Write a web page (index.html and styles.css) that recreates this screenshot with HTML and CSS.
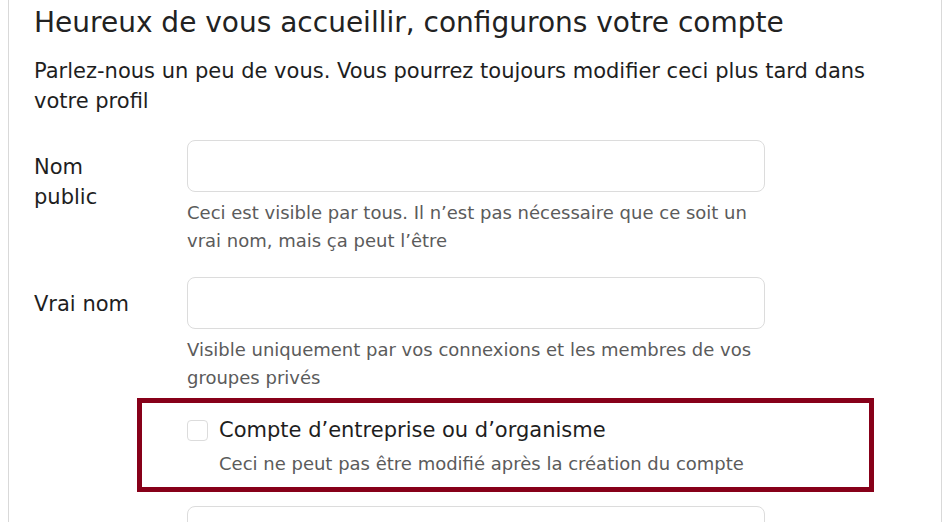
FILE: index.html
```html
<!DOCTYPE html>
<html lang="fr">
<head>
    <meta charset="UTF-8">
    <meta name="viewport" content="width=device-width, initial-scale=1.0">
    <title>Configurer votre compte</title>
    <link rel="stylesheet" href="styles.css">
</head>
<body>
    <div class="setup-card">
        <h1>Heureux de vous accueillir, configurons votre compte</h1>
        <p class="intro">Parlez-nous un peu de vous. Vous pourrez toujours modifier ceci plus tard dans votre profil</p>

        <!-- Public name -->
        <div class="field-row">
            <label class="field-label" for="publicName">Nom public</label>
            <div class="field-body">
                <input class="text-input" type="text" id="publicName">
                <p class="help">Ceci est visible par tous. Il n’est pas nécessaire que ce soit un vrai nom, mais ça peut l’être</p>
            </div>
        </div>

        <!-- Real name -->
        <div class="field-row">
            <label class="field-label" for="realName">Vrai nom</label>
            <div class="field-body">
                <input class="text-input" type="text" id="realName">
                <p class="help">Visible uniquement par vos connexions et les membres de vos groupes privés</p>
            </div>
        </div>

        <!-- Organisation account -->
        <div class="org-box">
            <label class="check-line">
                <input type="checkbox" class="check">
                <span>Compte d’entreprise ou d’organisme</span>
            </label>
            <p class="help check-help">Ceci ne peut pas être modifié après la création du compte</p>
        </div>

        <div class="field-row">
            <div class="field-label"></div>
            <div class="field-body">
                <input class="text-input" type="text" id="orgName">
            </div>
        </div>
    </div>
</body>
</html>
```

FILE: styles.css
```css
body {
    margin: 0 8px;
    font-family: "DejaVu Sans", sans-serif;
    color: #1e1e1e;
    background: #fff;
}

.setup-card {
    border-left: 1px solid #d9d9d9;
    border-right: 1px solid #d9d9d9;
    padding: 5px 25px 0;
    min-height: 600px;
}

h1 {
    margin: 0;
    font-size: 28px;
    font-weight: 500;
    line-height: 36px;
    color: #222;
}

.intro {
    margin: 15px 0 24px;
    font-size: 21px;
    line-height: 30px;
}

.field-row {
    display: flex;
    gap: 48px;
    margin-bottom: 22px;
}

.field-label {
    width: 105px;
    flex-shrink: 0;
    padding-top: 12px;
    font-size: 21px;
    line-height: 30px;
}

.field-body {
    width: 578px;
}

.text-input {
    display: block;
    box-sizing: border-box;
    width: 100%;
    height: 52px;
    border: 1px solid #dcdcdc;
    border-radius: 8px;
    background: #fff;
}

.help {
    margin: 7px 0 0;
    font-size: 18px;
    line-height: 28px;
    color: #5b5b5b;
}

.org-box {
    margin: -16px 0 14px 103px;
    width: 737px;
    border: 5px solid #870019;
    padding: 16px 0 9px 45px;
    box-sizing: border-box;
}

.check-line {
    display: flex;
    align-items: center;
    gap: 11px;
    font-size: 21px;
    line-height: 22px;
}

.check {
    appearance: none;
    margin: 0;
    width: 21px;
    height: 21px;
    border: 1px solid #dcdcdc;
    border-radius: 4px;
    background: #fff;
}

.check-help {
    margin: 9px 0 0 32px;
}
```
